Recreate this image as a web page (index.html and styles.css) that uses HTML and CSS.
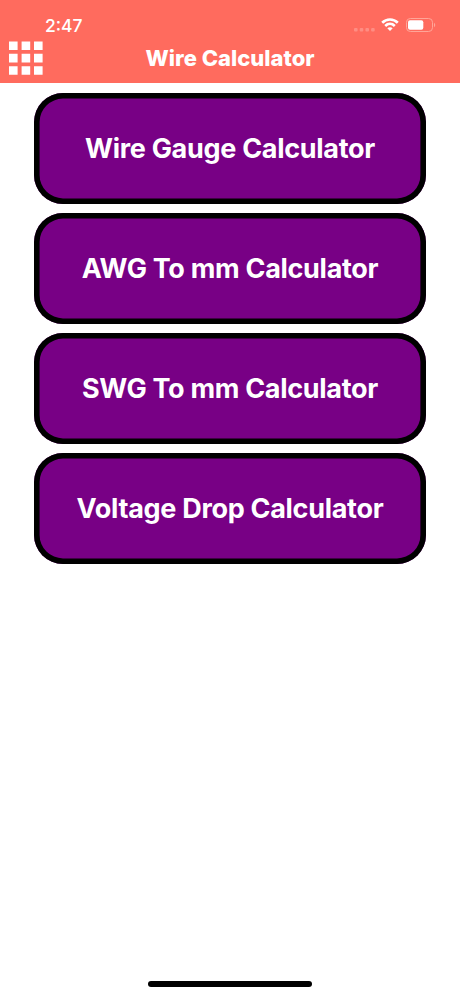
FILE: index.html
```
<!DOCTYPE html>
<html lang="en">
<head>
    <meta charset="utf-8">
    <title>Wire Calculator</title>
    <link rel="stylesheet" href="styles.css">
</head>
<body>
    <header class="header">
        <div class="status-bar">
            <span class="time">2:47</span>
            <div class="status-icons">
                <svg class="signal" width="21" height="4" viewBox="0 0 21 4">
                    <rect x="0" y="0" width="3.6" height="3.6" rx="1"/>
                    <rect x="5.7" y="0" width="3.6" height="3.6" rx="1"/>
                    <rect x="11.4" y="0" width="3.6" height="3.6" rx="1"/>
                    <rect x="17.1" y="0" width="3.6" height="3.6" rx="1"/>
                </svg>
                <svg class="wifi" width="18" height="13" viewBox="0 0 18 13">
                    <path d="M1.2 4.7 C5.6 0.4 12.4 0.4 16.8 4.7"/>
                    <path d="M4.2 7.9 C7 5.3 11 5.3 13.8 7.9"/>
                    <path class="wifi-dot" d="M9 13 L6.3 10.3 C7.8 8.9 10.2 8.9 11.7 10.3 Z"/>
                </svg>
                <svg class="battery" width="30" height="14" viewBox="0 0 30 14">
                    <rect class="battery-case" x="0.5" y="0.5" width="26" height="13" rx="3.8"/>
                    <rect class="battery-level" x="2" y="2.2" width="15.3" height="9.6" rx="2"/>
                    <path class="battery-tip" d="M28 4.8 C29.7 5.5 29.7 8.5 28 9.2 Z"/>
                </svg>
            </div>
        </div>
        <div class="nav-bar">
            <svg class="menu" width="34" height="34" viewBox="0 0 34 34">
                <path d="M0 0.4h8.6v8.6h-8.6z M12.6 0.4h8.6v8.6h-8.6z M25 0.4h8.6v8.6h-8.6z M0 12.8h8.6v8.6h-8.6z M12.6 12.8h8.6v8.6h-8.6z M25 12.8h8.6v8.6h-8.6z M0 25.2h8.6v8.6h-8.6z M12.6 25.2h8.6v8.6h-8.6z M25 25.2h8.6v8.6h-8.6z"/>
            </svg>
            <h1>Wire Calculator</h1>
        </div>
    </header>

    <main class="buttons">
        <button>Wire Gauge Calculator</button>
        <button>AWG To mm Calculator</button>
        <button>SWG To mm Calculator</button>
        <button>Voltage Drop Calculator</button>
    </main>

    <div class="home-indicator"></div>
</body>
</html>
```

FILE: styles.css
```
* {
    box-sizing: border-box;
}

body {
    margin: 0;
    height: 996px;
    display: flex;
    flex-direction: column;
    background-color: #fff;
    font-family: Inter, "Liberation Sans", sans-serif;
}

.header {
    height: 83.4px;
    background-color: #ff6b5e;
    color: #fff;
}

.status-bar {
    display: flex;
    justify-content: space-between;
    height: 41px;
    padding: 15px 24px 0 45px;
}

.time {
    font-size: 17.5px;
    font-weight: 500;
    line-height: 21px;
}

.status-icons {
    display: flex;
    height: 21px;
}

.signal {
    margin: 13px 6px 0 0;
    fill: #ff8d83;
}

.wifi {
    margin: 3px 7px 0 0;
    fill: none;
    stroke: #fff;
    stroke-width: 2.7;
}

.wifi-dot {
    fill: #fff;
    stroke: none;
}

.battery {
    margin-top: 3.4px;
}

.battery-case {
    fill: none;
    stroke: #ffa598;
}

.battery-level {
    fill: #fff;
}

.battery-tip {
    fill: #ffa598;
}

.nav-bar {
    display: grid;
    grid-template-columns: 34px 1fr 34px;
    padding: 0 9px;
}

.menu {
    fill: #fff;
}

.nav-bar h1 {
    margin: 0;
    font-size: 22px;
    font-weight: 800;
    line-height: 34px;
    text-align: center;
}

.buttons {
    flex: 1;
    display: flex;
    flex-direction: column;
    align-items: center;
    gap: 9px;
    padding-top: 9.2px;
}

.buttons button {
    width: 392px;
    height: 111px;
    padding: 0;
    border: none;
    border-radius: 29px;
    box-shadow: inset 0 0 0 5.6px #000;
    background-color: #780085;
    color: #fff;
    font-family: inherit;
    font-size: 27px;
    font-weight: 700;
    letter-spacing: -0.3px;
}

.home-indicator {
    width: 164px;
    height: 5.5px;
    margin: 0 auto 9.5px;
    border-radius: 3px;
    background-color: #000;
}
```
